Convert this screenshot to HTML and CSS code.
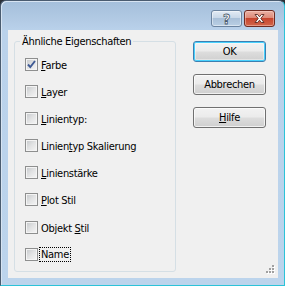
FILE: index.html
```html
<!DOCTYPE html>
<html lang="de">
<head>
<meta charset="utf-8">
<title>Ähnliche Eigenschaften</title>
<link rel="stylesheet" href="styles.css">
</head>
<body>
<div class="window">
  <div class="titlebar">
    <div class="tb-btn help">
      <svg width="29" height="15" viewBox="0 0 29 15"><text x="14.5" y="12.5" text-anchor="middle" class="qmark">?</text></svg>
    </div>
    <div class="tb-btn close">
      <svg width="29" height="15" viewBox="0 0 29 15"><path d="M10 3.5h2.6l1.9 2.3 1.9-2.3H19l-3.2 4 3.2 4h-2.6l-1.9-2.3-1.9 2.3H10l3.2-4z" fill="#fff" stroke="#5a2a22" stroke-width="0.9" stroke-linejoin="round"/></svg>
    </div>
  </div>
  <div class="client">
    <fieldset class="group">
      <legend class="legend">Ähnliche Eigenschaften</legend>
      <div class="list">
        <div class="row"><span class="cb"><svg width="11" height="11" viewBox="0 0 11 11"><path d="M2 5.5l2.3 2.6L9 2" fill="none" stroke="#3e5a94" stroke-width="1.9"/></svg></span><span class="lbl"><u>F</u>arbe</span></div>
        <div class="row"><span class="cb"></span><span class="lbl"><u>L</u>ayer</span></div>
        <div class="row"><span class="cb"></span><span class="lbl"><u>L</u>inientyp:</span></div>
        <div class="row"><span class="cb"></span><span class="lbl">Linien<u>t</u>yp Skalierung</span></div>
        <div class="row"><span class="cb"></span><span class="lbl"><u>L</u>inienstärke</span></div>
        <div class="row"><span class="cb"></span><span class="lbl"><u>P</u>lot Stil</span></div>
        <div class="row"><span class="cb"></span><span class="lbl">Objekt <u>S</u>til</span></div>
        <div class="row"><span class="cb"></span><span class="lbl focus">Name</span></div>
      </div>
    </fieldset>
    <div class="buttons">
      <div class="btn default">OK</div>
      <div class="btn">Abbrechen</div>
      <div class="btn"><u>H</u>ilfe</div>
    </div>
    <svg class="grip" width="12" height="12" viewBox="0 0 12 12">
      <g fill="#fff"><rect x="9" y="1" width="2" height="2"/><rect x="6" y="4" width="2" height="2"/><rect x="9" y="4" width="2" height="2"/><rect x="3" y="7" width="2" height="2"/><rect x="6" y="7" width="2" height="2"/><rect x="9" y="7" width="2" height="2"/></g>
      <g fill="#a0a0a0"><rect x="8" y="0" width="2" height="2"/><rect x="5" y="3" width="2" height="2"/><rect x="8" y="3" width="2" height="2"/><rect x="2" y="6" width="2" height="2"/><rect x="5" y="6" width="2" height="2"/><rect x="8" y="6" width="2" height="2"/></g>
    </svg>
  </div>
</div>
</body>
</html>
```
FILE: styles.css
```css
html, body {
  margin: 0;
  padding: 0;
  background: #2a2f36;
}
body {
  font-family: "DejaVu Sans Condensed", "DejaVu Sans", "Liberation Sans", sans-serif;
  font-stretch: semi-condensed;
  font-size: 11px;
  letter-spacing: -0.3px;
  color: #000;
}
.window {
  width: 285px;
  height: 286px;
  box-sizing: border-box;
  border: 1px solid #4a5c70;
  border-right-color: #2cc3d8;
  border-bottom-color: #2cc3d8;
  border-radius: 6px 6px 0 0;
  background: linear-gradient(#a4bfdb 0px, #b3cbe5 20px, #bad2eb 30px, #bcd4ec 100%);
  box-shadow: inset 1px 1px 0 #d7e4f2;
  padding: 0 6px 7px 7px;
  display: flex;
  flex-direction: column;
}
.titlebar {
  height: 29px;
  flex: none;
  display: flex;
  justify-content: flex-end;
  align-items: flex-start;
  padding-top: 9px;
  padding-right: 3px;
  gap: 2px;
  box-sizing: border-box;
}
.tb-btn {
  width: 31px;
  height: 17px;
  box-sizing: border-box;
  border-radius: 3px;
  display: flex;
  align-items: center;
  justify-content: center;
}
.help {
  border: 1px solid #6b84a0;
  background: linear-gradient(#e2ebf4 0%, #c9d8e8 45%, #a9c0d8 50%, #b9cfe4 100%);
  box-shadow: inset 0 0 0 1px rgba(255,255,255,0.45);
}
.qmark {
  font-family: "DejaVu Sans", sans-serif;
  font-weight: bold;
  font-size: 14px;
  fill: #fff;
  stroke: #4a5a6c;
  stroke-width: 0.8;
}
.close {
  border: 1px solid #6e2b22;
  background: linear-gradient(#eab1a4 0%, #de8a78 45%, #c7452e 50%, #d2664a 100%);
  box-shadow: inset 0 0 0 1px rgba(255,220,210,0.45);
}
.client {
  flex: 1;
  position: relative;
  background: #f0f0f0;
  display: flex;
  align-items: flex-start;
  padding: 5px 0 0 6px;
  box-sizing: border-box;
}
.group {
  margin: 0;
  width: 162px;
  height: 237px;
  box-sizing: border-box;
  padding: 10px 0 0 10px;
  border: 1px solid #d5dfe5;
  border-radius: 3px;
  min-width: 0;
}
.legend {
  padding: 0 2px;
  margin-left: -5px;
  line-height: 13px;
}
.list {
  display: flex;
  flex-direction: column;
  gap: 14.1px;
}
.row {
  display: flex;
  align-items: center;
  height: 13px;
  gap: 3px;
}
.cb {
  width: 13px;
  height: 13px;
  box-sizing: border-box;
  border: 1px solid #8e8f8f;
  background: linear-gradient(135deg, #c4c7ca 0%, #e2e3e4 50%, #f6f6f6 100%);
  box-shadow: inset 0 0 0 1px #f4f4f4;
  display: flex;
  align-items: center;
  justify-content: center;
  flex: none;
}
.lbl {
  line-height: 13px;
  padding-top: 2px;
  white-space: nowrap;
}
.focus {
  outline: 1px dotted #000;
  outline-offset: 0;
  padding: 0 1px;
  line-height: 13px;
  margin-left: -1px;
}
.buttons {
  display: flex;
  flex-direction: column;
  gap: 12px;
  margin-left: 17px;
  margin-top: 6px;
}
.btn {
  width: 73px;
  height: 21px;
  box-sizing: border-box;
  border: 1px solid #707070;
  border-radius: 3px;
  background: linear-gradient(#f2f2f2 0%, #ebebeb 48%, #dddddd 52%, #cfcfcf 100%);
  box-shadow: inset 0 0 0 1px rgba(255,255,255,0.7);
  display: flex;
  align-items: center;
  justify-content: center;
  line-height: 13px;
}
.btn.default {
  border-color: #3c7fb1;
  box-shadow: inset 0 0 0 1px #48d1fd, inset 0 0 0 2px rgba(255,255,255,0.4);
}
.grip {
  position: absolute;
  right: 2px;
  bottom: 1px;
}
```
